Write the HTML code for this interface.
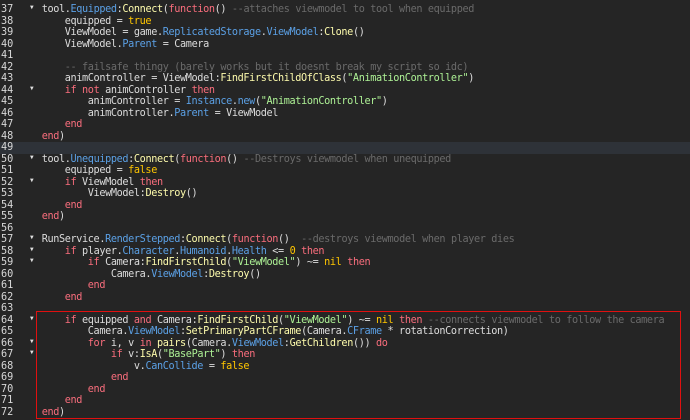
<!DOCTYPE html>
<html><head><style>
html,body{margin:0;padding:0;background:#252525;width:690px;height:420px;overflow:hidden}
#w{position:absolute;left:0;top:4.25px;width:690px}
.l{position:relative;height:11.5px;line-height:11.5px;font:10.2px "DejaVu Sans Mono",monospace;letter-spacing:-0.37px;white-space:pre;color:#dcdcdc}
.n{position:absolute;left:1px;width:20px;color:#d8d8d8;letter-spacing:0}
.a{position:absolute;left:30px;top:0;color:#e0e0e0;font-size:6px;letter-spacing:0}
.c{position:absolute;left:41.7px}
.hl{background:#2e3238}
.b{color:#5ba0e5}.f{color:#fdfbac}.k{color:#f86d7c}.y{color:#ffc600}.m{color:#6a6a6a}.s{color:#adf195}
#box{position:absolute;left:36px;top:311px;width:643px;height:106px;border:1px solid #e01010}
</style></head><body>
<div id="w">
<div class="l"><span class="n">37</span><span class="a">▼</span><span class="c">tool.<span class="b">Equipped</span>:<span class="f">Connect</span>(<span class="k">function</span>() <span class="m">--attaches viewmodel to tool when equipped</span></span></div>
<div class="l"><span class="n">38</span><span class="c">    equipped = <span class="y">true</span></span></div>
<div class="l"><span class="n">39</span><span class="c">    ViewModel = game.<span class="b">ReplicatedStorage</span>.<span class="b">ViewModel</span>:<span class="f">Clone</span>()</span></div>
<div class="l"><span class="n">40</span><span class="c">    ViewModel.<span class="b">Parent</span> = Camera</span></div>
<div class="l"><span class="n">41</span></div>
<div class="l"><span class="n">42</span><span class="c">    <span class="m">-- failsafe thingy (barely works but it doesnt break my script so idc)</span></span></div>
<div class="l"><span class="n">43</span><span class="c">    animController = ViewModel:<span class="f">FindFirstChildOfClass</span>(<span class="s">"AnimationController"</span>)</span></div>
<div class="l"><span class="n">44</span><span class="a">▼</span><span class="c">    <span class="k">if not</span> animController <span class="k">then</span></span></div>
<div class="l"><span class="n">45</span><span class="c">        animController = <span class="b">Instance</span>.<span class="b">new</span>(<span class="s">"AnimationController"</span>)</span></div>
<div class="l"><span class="n">46</span><span class="c">        animController.<span class="b">Parent</span> = ViewModel</span></div>
<div class="l"><span class="n">47</span><span class="c">    <span class="k">end</span></span></div>
<div class="l"><span class="n">48</span><span class="c"><span class="k">end</span>)</span></div>
<div class="l hl"><span class="n">49</span></div>
<div class="l"><span class="n">50</span><span class="a">▼</span><span class="c">tool.<span class="b">Unequipped</span>:<span class="f">Connect</span>(<span class="k">function</span>() <span class="m">--Destroys viewmodel when unequipped</span></span></div>
<div class="l"><span class="n">51</span><span class="c">    equipped = <span class="y">false</span></span></div>
<div class="l"><span class="n">52</span><span class="a">▼</span><span class="c">    <span class="k">if</span> ViewModel <span class="k">then</span></span></div>
<div class="l"><span class="n">53</span><span class="c">        ViewModel:<span class="f">Destroy</span>()</span></div>
<div class="l"><span class="n">54</span><span class="c">    <span class="k">end</span></span></div>
<div class="l"><span class="n">55</span><span class="c"><span class="k">end</span>)</span></div>
<div class="l"><span class="n">56</span></div>
<div class="l"><span class="n">57</span><span class="a">▼</span><span class="c">RunService.<span class="b">RenderStepped</span>:<span class="f">Connect</span>(<span class="k">function</span>()  <span class="m">--destroys viewmodel when player dies</span></span></div>
<div class="l"><span class="n">58</span><span class="a">▼</span><span class="c">    <span class="k">if</span> player.<span class="b">Character</span>.<span class="b">Humanoid</span>.<span class="b">Health</span> &lt;= <span class="y">0</span> <span class="k">then</span></span></div>
<div class="l"><span class="n">59</span><span class="a">▼</span><span class="c">        <span class="k">if</span> Camera:<span class="f">FindFirstChild</span>(<span class="s">"ViewModel"</span>) ~= <span class="y">nil</span> <span class="k">then</span></span></div>
<div class="l"><span class="n">60</span><span class="c">            Camera.<span class="b">ViewModel</span>:<span class="f">Destroy</span>()</span></div>
<div class="l"><span class="n">61</span><span class="c">        <span class="k">end</span></span></div>
<div class="l"><span class="n">62</span><span class="c">    <span class="k">end</span></span></div>
<div class="l"><span class="n">63</span></div>
<div class="l"><span class="n">64</span><span class="a">▼</span><span class="c">    <span class="k">if</span> equipped <span class="k">and</span> Camera:<span class="f">FindFirstChild</span>(<span class="s">"ViewModel"</span>) ~= <span class="y">nil</span> <span class="k">then</span> <span class="m">--connects viewmodel to follow the camera</span></span></div>
<div class="l"><span class="n">65</span><span class="c">        Camera.<span class="b">ViewModel</span>:<span class="f">SetPrimaryPartCFrame</span>(Camera.<span class="b">CFrame</span> * rotationCorrection)</span></div>
<div class="l"><span class="n">66</span><span class="a">▼</span><span class="c">        <span class="k">for</span> i, v <span class="k">in</span> <span class="f">pairs</span>(Camera.<span class="b">ViewModel</span>:<span class="f">GetChildren</span>()) <span class="k">do</span></span></div>
<div class="l"><span class="n">67</span><span class="a">▼</span><span class="c">            <span class="k">if</span> v:<span class="f">IsA</span>(<span class="s">"BasePart"</span>) <span class="k">then</span></span></div>
<div class="l"><span class="n">68</span><span class="c">                v.<span class="b">CanCollide</span> = <span class="y">false</span></span></div>
<div class="l"><span class="n">69</span><span class="c">            <span class="k">end</span></span></div>
<div class="l"><span class="n">70</span><span class="c">        <span class="k">end</span></span></div>
<div class="l"><span class="n">71</span><span class="c">    <span class="k">end</span></span></div>
<div class="l"><span class="n">72</span><span class="c"><span class="k">end</span>)</span></div>
</div>
<div id="box"></div>
</body></html>
